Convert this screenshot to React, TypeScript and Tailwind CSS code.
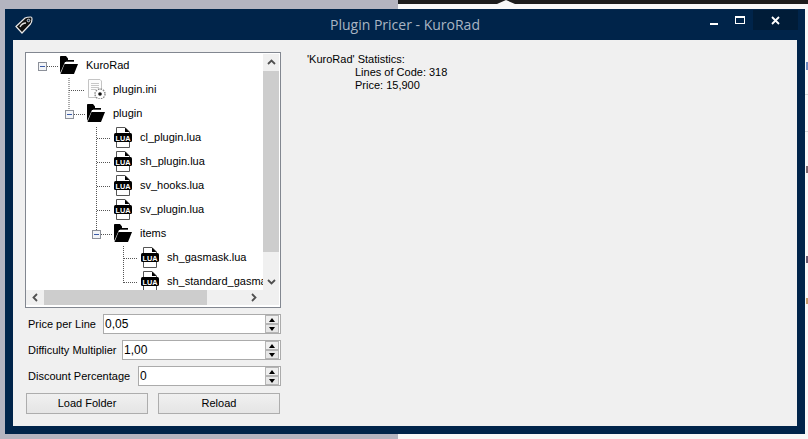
import React from "react";

const FONT = "font-['Liberation_Sans',Arial,sans-serif]";

function Folder() {
  return (
    <svg width="18" height="20" viewBox="0 0 18 20" className="block">
      <path d="M0 1.5 Q0 1 1 1 H6 L8 3.5 V5 H14 V7 H5 L1.5 15 L0 18 Z" fill="#000" />
      <path d="M4.5 9 H14 L18 9 L14 19 H0.5 Z" fill="#000" />
      <path d="M6 7.2 H14.5" stroke="#fff" strokeWidth="1" />
    </svg>
  );
}

function LuaFile() {
  return (
    <svg width="18" height="21" viewBox="0 0 18 21" className="block">
      <path d="M2.5 .5 H11 L15.5 5 V20.5 H2.5 Z" fill="#fff" stroke="#555" />
      <path d="M11 .5 V5 H15.5 Z" fill="#000" />
      <rect x="0" y="6" width="18" height="9" rx="1.5" fill="#000" />
      <text x="9" y="13.5" textAnchor="middle" fontSize="8" fontWeight="700" fill="#fff" fontFamily="Liberation Sans" textLength="15" lengthAdjust="spacingAndGlyphs">LUA</text>
    </svg>
  );
}

function IniFile() {
  return (
    <svg width="19" height="20" viewBox="0 0 19 20" className="block">
      <path d="M1.5 .5 H13 L14.5 2 V18.5 H1.5 Z" fill="#fdfdfd" stroke="#c4c4c4" />
      <path d="M4 4.5 H12 M4 6.5 H12 M4 8.5 H12 M4 10.5 H9" stroke="#c8c8c8" />
      <circle cx="13" cy="15" r="5" fill="#fff" stroke="#888" strokeWidth="1.4" strokeDasharray="1.6 1" />
      <circle cx="13" cy="15" r="1.8" fill="#111" />
    </svg>
  );
}

function TagIcon() {
  return (
    <svg width="18" height="18" viewBox="0 0 18 18" className="block">
      <path d="M1 10.5 L10 2 Q12 1 16 1 Q17 1 17 3 Q17 6 15.5 8 L7 17 Z" fill="#111" stroke="#e8e8e8" strokeWidth="1.2" />
      <circle cx="13.5" cy="4.5" r="1.3" fill="#00244a" stroke="#fff" strokeWidth=".8" />
      <path d="M5 11 Q7 7 11 7" fill="none" stroke="#e0e0e0" strokeWidth="1.4" />
    </svg>
  );
}

function Chevron({ dir }: { dir: "up" | "down" | "left" | "right" }) {
  const d = {
    up: "M1 6 L4.5 2.5 L8 6",
    down: "M1 3 L4.5 6.5 L8 3",
    left: "M6 1 L2.5 4.5 L6 8",
    right: "M3 1 L6.5 4.5 L3 8",
  }[dir];
  return (
    <svg width="9" height="9" viewBox="0 0 9 9" className="block">
      <path d={d} fill="none" stroke="#505050" strokeWidth="1.8" />
    </svg>
  );
}

const rows: { label: string; kind: "folder" | "lua" | "ini"; pad: string }[] = [
  { label: "KuroRad", kind: "folder", pad: "pl-[34px]" },
  { label: "plugin.ini", kind: "ini", pad: "pl-[61px]" },
  { label: "plugin", kind: "folder", pad: "pl-[61px]" },
  { label: "cl_plugin.lua", kind: "lua", pad: "pl-[88px]" },
  { label: "sh_plugin.lua", kind: "lua", pad: "pl-[88px]" },
  { label: "sv_hooks.lua", kind: "lua", pad: "pl-[88px]" },
  { label: "sv_plugin.lua", kind: "lua", pad: "pl-[88px]" },
  { label: "items", kind: "folder", pad: "pl-[88px]" },
  { label: "sh_gasmask.lua", kind: "lua", pad: "pl-[115px]" },
  { label: "sh_standard_gasmask.lua", kind: "lua", pad: "pl-[115px]" },
];

function Expander({ x, y }: { x: number; y: number }) {
  return (
    <g>
      <rect x={x + 0.5} y={y + 0.5} width="8" height="8" fill="#f2f4f7" stroke="#8c9099" />
      <path d={`M${x + 2} ${y + 4.5} H${x + 7}`} stroke="#3a5ba8" />
    </g>
  );
}

function TreeLines() {
  const d =
    "M47 66.5 H58 M69 78 V115 M69 90.5 H84 M74 114.5 H85 M96.5 127 V230 M97 138.5 H111 M97 162.5 H111 M97 186.5 H111 M97 210.5 H111 M101 234.5 H112 M123.5 246 V283 M124 258.5 H138 M124 282.5 H138";
  return (
    <svg viewBox="26 53 237 237" className="absolute inset-0 w-[237px] h-[237px] pointer-events-none">
      <path d={d} fill="none" stroke="#555" strokeDasharray="1 1" />
      <Expander x={38} y={62} />
      <Expander x={65} y={110} />
      <Expander x={92} y={230} />
    </svg>
  );
}

function Tree() {
  return (
    <div className="w-[256px] h-[256px] border border-[#828790] bg-white flex flex-col">
      <div className="flex h-[237px]">
        <div className="relative w-[237px] h-[237px] overflow-hidden">
          <TreeLines />
          <div className="flex flex-col">
            {rows.map((r) => (
              <div key={r.label} className={`flex items-center h-6 shrink-0 ${r.pad}`}>
                <div className="w-[26px] shrink-0">
                  {r.kind === "folder" ? <Folder /> : r.kind === "lua" ? <LuaFile /> : <IniFile />}
                </div>
                <span className="whitespace-nowrap text-[11px] pt-px text-black">{r.label}</span>
              </div>
            ))}
          </div>
        </div>
        <div className="w-[16px] mt-px bg-[#f0f0f0] flex flex-col">
          <div className="h-[17px] flex items-center justify-center shrink-0">
            <Chevron dir="up" />
          </div>
          <div className="h-[181px] bg-[#cdcdcd] shrink-0" />
          <div className="flex-1 flex items-end justify-center pb-[4px]">
            <Chevron dir="down" />
          </div>
        </div>
      </div>
      <div className="flex h-[15px] bg-[#f0f0f0] w-[253px]">
        <div className="w-[18px] flex items-center justify-center shrink-0">
          <Chevron dir="left" />
        </div>
        <div className="w-[163px] bg-[#cdcdcd] shrink-0" />
        <div className="flex-1 flex items-center justify-end pr-[21px]">
          <Chevron dir="right" />
        </div>
      </div>
    </div>
  );
}

function SpinRow({ label, value, labelW }: { label: string; value: string; labelW: string }) {
  return (
    <div className="flex items-center h-5">
      <div className={`${labelW} shrink-0 pl-[3px] text-[11px] text-black whitespace-nowrap`}>{label}</div>
      <div className="flex-1 h-5 border border-[#ababab] bg-white flex items-center justify-between pl-[1px] pr-[1px] text-[12px] text-black">
        <span>{value}</span>
        <div className="w-[14px] h-[18px] flex flex-col">
          <div className="h-[9px] border border-[#b5b5b5] bg-[#efefef] flex items-center justify-center">
            <div className="w-0 h-0 border-x-[3.5px] border-x-transparent border-b-[4px] border-b-black" />
          </div>
          <div className="h-[9px] border border-[#b5b5b5] bg-[#e6e6e6] flex items-center justify-center">
            <div className="w-0 h-0 border-x-[3.5px] border-x-transparent border-t-[4px] border-t-black" />
          </div>
        </div>
      </div>
    </div>
  );
}

function Btn({ children }: { children: React.ReactNode }) {
  return (
    <button className="w-[122px] h-[21px] border border-[#adadad] bg-gradient-to-b from-[#f0f0f0] to-[#e5e5e5] text-[11px] text-black">
      {children}
    </button>
  );
}

export default function App() {
  return (
    <div className={`relative w-[808px] h-[439px] overflow-hidden flex ${FONT}`}>
      <div className="w-[398px] bg-[#b4b4c0]" />
      <div className="flex-1 bg-[#f8f8f8] flex flex-col">
        <div className="h-[4px] bg-[#1c1c1c]" />
      </div>
      {/* notch of the page behind */}
      <div className="absolute left-[497px] top-0 w-0 h-0 border-x-[9px] border-x-transparent border-b-[4px] border-b-[#f8f8f8]" />
      {/* fragments of the page behind, at the right edge */}
      <div className="absolute left-[806px] top-[62px] w-[2px] h-[8px] bg-[#6f88c0]" />
      <div className="absolute left-[805px] top-[94px] w-[3px] h-px bg-[#d8d8d8]" />
      <div className="absolute left-[805px] top-[131px] w-[3px] h-px bg-[#d8d8d8]" />
      <div className="absolute left-[806px] top-[166px] w-[2px] h-[7px] bg-[#7f6a70]" />
      <div className="absolute left-[806px] top-[256px] w-[2px] h-[7px] bg-[#6a5a70]" />
      <div className="absolute left-[806px] top-[298px] w-[2px] h-[6px] bg-[#c9a070]" />

      {/* the window on the desktop */}
      <div className="absolute left-[5px] top-[9px] w-[800px] h-[425px] bg-[#00244a] flex flex-col">
        <div className="h-[31px] shrink-0 grid grid-cols-[1fr_auto_1fr]">
          <div className="pl-[10px] pt-[7px]">
            <TagIcon />
          </div>
          <div className="font-['Open_Sans',sans-serif] text-[14px] leading-[31px] text-[#a9b5c3]">
            Plugin Pricer - KuroRad
          </div>
          <div className="flex justify-end items-start pr-[7px] pt-px">
            <div className="w-[26px] h-5 flex justify-center items-end pb-[5px]">
              <div className="w-[8px] h-[2px] bg-white" />
            </div>
            <div className="w-[26px] h-5 flex justify-center items-center pb-px">
              <div className="w-[10px] h-[8px] border border-t-2 border-white" />
            </div>
            <div className="w-[45px] h-5 bg-[#001c38] flex items-center justify-center">
              <svg width="9" height="9" viewBox="0 0 9 9" className="block">
                <path d="M1 1 L8 8 M8 1 L1 8" stroke="#fff" strokeWidth="1.8" />
              </svg>
            </div>
          </div>
        </div>
        <div className="mx-2 mb-2 flex-1 bg-[#f0f0f0] flex items-start pl-3 pt-3 text-black">
          <div className="w-[256px] flex flex-col">
            <Tree />
            <div className="flex flex-col gap-[6px] mt-[6px]">
              <SpinRow label="Price per Line" value="0,05" labelW="w-[78px]" />
              <SpinRow label="Difficulty Multiplier" value="1,00" labelW="w-[97px]" />
              <SpinRow label="Discount Percentage" value="0" labelW="w-[113px]" />
            </div>
            <div className="flex gap-[10px] mt-[7px] ml-px">
              <Btn>Load Folder</Btn>
              <Btn>Reload</Btn>
            </div>
          </div>
          <div className="ml-[26px] mt-px text-[11px] leading-[13px]">
            <div>'KuroRad' Statistics:</div>
            <div className="pl-[48px]">Lines of Code: 318</div>
            <div className="pl-[48px]">Price: 15,900</div>
          </div>
        </div>
      </div>
    </div>
  );
}
